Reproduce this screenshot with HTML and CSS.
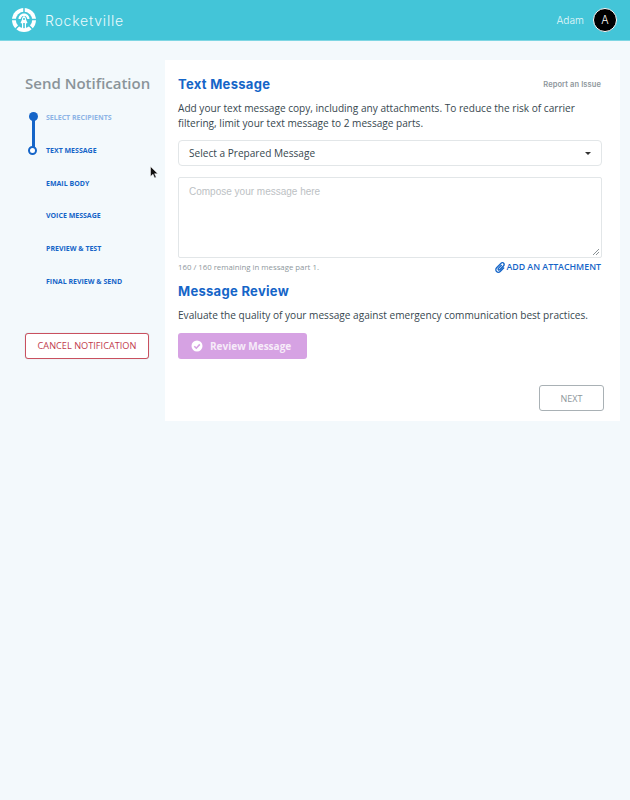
FILE: index.html
```html
<!DOCTYPE html>
<html lang="en">
<head>
    <meta charset="UTF-8">
    <meta name="viewport" content="width=device-width, initial-scale=1.0">
    <title>Send Notification - Rocketville</title>
    <link rel="stylesheet" href="styles.css">
</head>
<body>
    <header class="topbar">
        <div class="brand">
            <svg class="logo" viewBox="0 0 24 24" width="24" height="24">
                <circle cx="12" cy="12" r="12" fill="#fff"/>
                <circle cx="12" cy="12" r="8.200" fill="#43c5d8"/>
                <path d="M12 -1v5M-1 11.500h6M19 11.500h6M3.500 21l4-4M20.500 21l-4-4" stroke="#43c5d8" stroke-width="1.500" fill="none"/>
                <path d="M12 5.500c-3.200 0-5.500 2.400-5.500 5.500h2.200c.3-1.400 1-2.400 2-3 .4.500.8.600 1.300.6s.9-.1 1.300-.6c1 .6 1.700 1.600 2 3h2.200c0-3.100-2.300-5.500-5.500-5.500z" fill="#fff"/>
                <path d="M12 8.500c-1.500 0-2 1.500-2 3l-1.500 3.500 1.500.5v5.500h1.200v-6h1.600v6h1.200v-5.500l1.500-.5-1.500-3.500c0-1.500-.5-3-2-3z" fill="#fff"/>
                <circle cx="12" cy="11" r="1" fill="#43c5d8"/>
            </svg>
            <span class="brand-name">Rocketville</span>
        </div>
        <div class="user">
            <span class="user-name">Adam</span>
            <span class="avatar">A</span>
        </div>
    </header>

    <main class="layout">
        <aside class="sidebar">
            <h2 class="sidebar-title">Send Notification</h2>
            <ol class="steps">
                <li class="step step-done">Select Recipients</li>
                <li class="step step-current">Text Message</li>
                <li class="step">Email Body</li>
                <li class="step">Voice Message</li>
                <li class="step">Preview &amp; Test</li>
                <li class="step">Final Review &amp; Send</li>
            </ol>
            <button class="cancel-btn" type="button">CANCEL NOTIFICATION</button>
        </aside>

        <section class="card">
            <div class="card-head">
                <h3 class="section-title">Text Message</h3>
                <a class="report-link">Report an Issue</a>
            </div>
            <p class="copy">Add your text message copy, including any attachments. To reduce the risk of carrier filtering, limit your text message to 2 message parts.</p>

            <div class="select-box">
                <span>Select a Prepared Message</span>
                <span class="caret"></span>
            </div>

            <div class="compose">
                <span class="placeholder">Compose your message here</span>
                <svg class="grip" viewBox="0 0 8 8" width="8" height="8">
                    <path d="M1 7l6-6M4 7l3-3" stroke="#8a9296" stroke-width="1" fill="none"/>
                </svg>
            </div>

            <div class="compose-foot">
                <span class="counter">160 / 160 remaining in message part 1.</span>
                <a class="attach-link">
                    <svg viewBox="0 0 448 512" width="10" height="11">
                        <path fill="#1565c8" d="M43 466c-58-60-57-157 1-217L254 34c45-46 118-46 163 0 44 45 44 118 0 164L234 385c-30 31-80 31-110-1-29-31-28-80 1-110l144-147c6-6 16-6 23 0l23 22c6 7 6 17 0 23L171 319c-5 5-5 14-1 19 4 5 11 5 16 0l183-187c20-20 20-53 0-74-20-20-52-20-72 0L87 292c-35 36-35 94-1 130 34 35 89 35 123 0l172-176c6-6 16-6 23 0l23 23c6 6 6 16 0 22L255 467c-59 60-154 60-212-1z"/>
                    </svg>
                    ADD AN ATTACHMENT
                </a>
            </div>

            <h3 class="section-title review-title">Message Review</h3>
            <p class="copy">Evaluate the quality of your message against emergency communication best practices.</p>

            <button class="review-btn" type="button">
                <svg viewBox="0 0 12 12" width="12" height="12">
                    <circle cx="6" cy="6" r="5.500" fill="#fff"/>
                    <path d="M3.300 6.200l2 2 3.500-3.800" stroke="#d6a2e3" stroke-width="1.600" fill="none"/>
                </svg>
                <span>Review Message</span>
            </button>

            <div class="card-foot">
                <button class="next-btn" type="button">NEXT</button>
            </div>
        </section>
    </main>

    <svg class="cursor" viewBox="0 0 8 13" width="8" height="13">
        <path d="M0.500 0.500v10l2.500-2.300 1.600 3.800 1.600-.7-1.600-3.600h3.200z" fill="#111" stroke="#fff" stroke-width="0.500"/>
    </svg>
</body>
</html>
```

FILE: styles.css
```css
* {
    box-sizing: border-box;
}
body {
    margin: 0;
    height: 800px;
    overflow: hidden;
    position: relative;
    font-family: "Open Sans", sans-serif;
    background-color: #f3f9fc;
    color: #37474f;
}
.topbar {
    height: 41px;
    padding: 0 13px 0 12px;
    display: flex;
    align-items: center;
    justify-content: space-between;
    background-color: #43c5d8;
    border-bottom: 1px solid #7ed6e3;
}
.brand {
    display: flex;
    align-items: center;
    gap: 9px;
}
.brand-name {
    font-family: "Inter", sans-serif;
    font-size: 14px;
    font-weight: 300;
    letter-spacing: 0.800px;
    color: #eafafc;
}
.user {
    display: flex;
    align-items: center;
    gap: 9px;
}
.user-name {
    font-family: "Inter", sans-serif;
    font-size: 10.200px;
    font-weight: 300;
    color: #e6f8fb;
}
.avatar {
    width: 24px;
    height: 24px;
    border-radius: 50%;
    border: 1px solid #fff;
    background: #000;
    color: #fff;
    font-family: "Inter", sans-serif;
    font-size: 11px;
    font-weight: 300;
    display: flex;
    align-items: center;
    justify-content: center;
}
.layout {
    display: flex;
    align-items: flex-start;
    padding: 19px 10px 0 0;
}
.sidebar {
    width: 165px;
    flex-shrink: 0;
    padding: 13px 0 0 25px;
}
.sidebar-title {
    margin: 0 0 20px;
    font-size: 15px;
    font-weight: 600;
    line-height: 20px;
    white-space: nowrap;
    color: #8a9499;
}
.steps {
    list-style: none;
    margin: 0;
    padding: 0 0 0 21px;
}
.step {
    height: 32.800px;
    font-size: 7px;
    font-weight: 700;
    line-height: 10px;
    text-transform: uppercase;
    color: #1565c8;
    position: relative;
}
.step-done {
    color: #8db4e6;
}
.step-done::before {
    content: "";
    position: absolute;
    left: -17.500px;
    top: -1px;
    width: 9px;
    height: 9px;
    border-radius: 50%;
    background: #1565c8;
}
.step-done::after {
    content: "";
    position: absolute;
    left: -14.500px;
    top: 4px;
    width: 3px;
    height: 30px;
    background: #1565c8;
}
.step-current::before {
    content: "";
    position: absolute;
    left: -18px;
    top: 0;
    width: 5px;
    height: 5px;
    border-radius: 50%;
    border: 2.500px solid #1565c8;
    background: #fff;
}
.cancel-btn {
    display: block;
    width: 124px;
    height: 26px;
    margin-top: 23px;
    padding: 0;
    font-family: "Open Sans", sans-serif;
    font-size: 9.200px;
    font-weight: 400;
    color: #bf3a4c;
    background: #fff;
    border: 1px solid #c9505f;
    border-radius: 3px;
    box-shadow: 0 0 1px rgba(0,0,0,0.25);
}
.card {
    flex: 1;
    height: 361px;
    padding: 14px 18px 0 13px;
    background: #fff;
    position: relative;
}
.card-head {
    display: flex;
    align-items: center;
    justify-content: space-between;
    height: 20px;
    margin-bottom: 7px;
}
.section-title {
    margin: 0;
    font-family: "Inter", sans-serif;
    font-size: 13px;
    font-weight: 700;
    line-height: 20px;
    letter-spacing: 0.300px;
    color: #1565c8;
}
.report-link {
    margin-right: 1px;
    font-family: "Inter", sans-serif;
    font-size: 7.500px;
    font-weight: 600;
    letter-spacing: 0.100px;
    color: #8e979c;
}
.copy {
    margin: 0;
    font-size: 10.100px;
    line-height: 14.500px;
    color: #37474f;
}
.select-box {
    height: 26px;
    margin-top: 10px;
    padding: 0 10px;
    display: flex;
    align-items: center;
    justify-content: space-between;
    font-size: 10.100px;
    color: #37474f;
    border: 1px solid #e2e6e8;
    border-radius: 4px;
}
.caret {
    width: 0;
    height: 0;
    border-left: 3px solid transparent;
    border-right: 3px solid transparent;
    border-top: 3px solid #333;
}
.compose {
    height: 81px;
    margin-top: 11px;
    padding: 8px 10px;
    border: 1px solid #e2e6e8;
    border-radius: 2px;
    position: relative;
}
.placeholder {
    display: block;
    font-family: "Liberation Sans", sans-serif;
    font-size: 10px;
    line-height: 12px;
    color: #bcc1c4;
}
.grip {
    position: absolute;
    right: 1px;
    bottom: 1px;
}
.compose-foot {
    display: flex;
    align-items: center;
    justify-content: space-between;
    height: 12px;
    margin-top: 3px;
}
.counter {
    font-size: 7.800px;
    color: #8e979c;
}
.attach-link {
    display: flex;
    align-items: center;
    gap: 1px;
    margin-right: 1px;
    font-size: 8.800px;
    font-weight: 600;
    color: #1565c8;
}
.review-title {
    margin-top: 8px;
    margin-bottom: 7px;
}
.review-btn {
    display: flex;
    align-items: center;
    gap: 7px;
    width: 129px;
    height: 26px;
    margin-top: 10px;
    padding: 0 13px;
    font-family: "Open Sans", sans-serif;
    font-size: 10px;
    font-weight: 700;
    white-space: nowrap;
    color: #f6ecf9;
    background: #d6a2e3;
    border: none;
    border-radius: 3px;
}
.card-foot {
    position: absolute;
    right: 16px;
    bottom: 10px;
}
.next-btn {
    display: block;
    width: 65px;
    height: 26px;
    padding: 0;
    font-family: "Open Sans", sans-serif;
    font-size: 9px;
    font-weight: 400;
    color: #8e979c;
    background: #fff;
    border: 1px solid #a9b1b5;
    border-radius: 3px;
}
.cursor {
    position: absolute;
    left: 150px;
    top: 166px;
}
```
